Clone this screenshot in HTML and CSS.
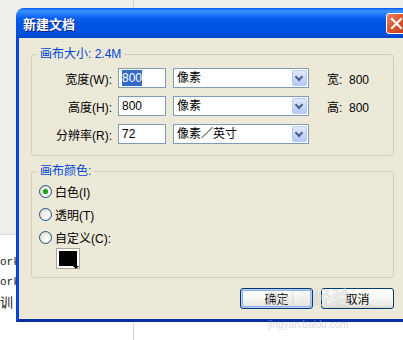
FILE: index.html
```html
<!DOCTYPE html>
<html lang="zh-CN">
<head>
    <meta charset="UTF-8">
    <title>新建文档</title>
    <link rel="stylesheet" href="styles.css">
</head>
<body>
    <div class="side">
        <p>ork</p>
        <p>ork</p>
        <p class="cjk">训</p>
    </div>

    <section class="dialog">
        <header class="titlebar">
            <h1>新建文档</h1>
            <span class="close">
                <svg width="13" height="13" viewBox="0 0 13 13">
                    <path d="M2 2 L11 11 M11 2 L2 11" stroke="#fff" stroke-width="2.2" stroke-linecap="square" fill="none"/>
                </svg>
            </span>
        </header>

        <div class="dialog-body">
            <fieldset class="group size-group">
                <legend>画布大小: 2.4M</legend>
                <div class="row">
                    <label>宽度(W):</label>
                    <span class="field"><span class="hl">800</span></span>
                    <span class="select">像素<span class="drop"></span></span>
                    <span class="info">宽:&nbsp; 800</span>
                </div>
                <div class="row">
                    <label>高度(H):</label>
                    <span class="field">800</span>
                    <span class="select">像素<span class="drop"></span></span>
                    <span class="info">高:&nbsp; 800</span>
                </div>
                <div class="row">
                    <label>分辨率(R):</label>
                    <span class="field">72</span>
                    <span class="select">像素／英寸<span class="drop"></span></span>
                </div>
            </fieldset>

            <fieldset class="group color-group">
                <legend>画布颜色:</legend>
                <div class="radio-row"><span class="radio checked"></span>白色(I)</div>
                <div class="radio-row"><span class="radio"></span>透明(T)</div>
                <div class="radio-row"><span class="radio"></span>自定义(C):</div>
                <div class="swatch"><span class="swatch-arrow"></span></div>
            </fieldset>

            <div class="buttons">
                <button class="btn default">确定</button>
                <button class="btn">取消</button>
            </div>
        </div>

        <div class="watermark">
            <span class="wm-logo">Bai<span class="paw">❀</span>经验</span>
            <span class="wm-url">jingyan.baidu.com</span>
        </div>
    </section>
</body>
</html>
```

FILE: styles.css
```css
body {
    margin: 0;
    width: 403px;
    height: 340px;
    overflow: hidden;
    position: relative;
    font-family: "Liberation Sans", "Noto Sans CJK SC", sans-serif;
    font-size: 12px;
    color: #000;
    background:
        linear-gradient(90deg, transparent 133px, #d4d4d0 133px, #d4d4d0 134px, transparent 134px),
        linear-gradient(180deg, #efeeea 234px, #d9d9d6 234px, #d9d9d6 235px, #fff 235px);
}

/* page text peeking out left of the dialog */
.side {
    padding-top: 252px;
    font-family: "Liberation Mono", "Noto Sans CJK SC", monospace;
    font-size: 11px;
    line-height: 20px;
    color: #222;
}

.side p {
    margin: 0;
    white-space: nowrap;
}

.side .cjk {
    font-family: "Noto Sans CJK SC", sans-serif;
    font-size: 13px;
}

/* the window */
.dialog {
    position: absolute;
    left: 16px;
    top: 8px;
    width: 396px;
}

.titlebar {
    height: 30px;
    display: flex;
    align-items: center;
    justify-content: space-between;
    border-radius: 8px 8px 0 0;
    background: linear-gradient(180deg, #0058ee 0%, #3d95ff 10%, #2b80fb 18%, #0a5eee 34%, #0055e5 55%, #0053e0 80%, #0046c8 100%);
}

.titlebar h1 {
    margin: 0 0 0 7px;
    font-family: "Noto Sans CJK SC", sans-serif;
    font-size: 13px;
    font-weight: bold;
    color: #fff;
    text-shadow: 1px 1px 0 #0a1e78;
}

.close {
    width: 19px;
    height: 19px;
    margin-right: 5px;
    display: flex;
    align-items: center;
    justify-content: center;
    border: 1px solid #fff;
    border-radius: 3px;
    background: linear-gradient(135deg, #e9876a 0%, #d9582f 45%, #c23b14 100%);
}

.dialog-body {
    background: #ece9d8;
    border: 3px solid #0846d9;
    border-top: 0;
    border-bottom-color: #0a2ea0;
    padding: 9px 15px 10px 12px;
}

.group {
    margin: 0;
    border: 1px solid #d0d0bf;
    border-radius: 3px;
    min-inline-size: 0;
}

.group legend {
    margin-left: 5px;
    padding: 0 3px;
    line-height: 14px;
    color: #0046d5;
}

.size-group {
    padding: 7px 0 11px 0;
}

.row {
    display: flex;
    align-items: center;
    height: 20px;
    margin-bottom: 8px;
}

.row:last-child {
    margin-bottom: 0;
}

.row label {
    width: 80px;
    text-align: right;
}

.field {
    margin-left: 6px;
    width: 43px;
    height: 18px;
    line-height: 18px;
    padding-left: 3px;
    border: 1px solid #7f9db9;
    background: #fff;
}

.hl {
    background: #316ac5;
    color: #fff;
    padding: 1px 0;
}

.select {
    margin-left: 7px;
    width: 131px;
    height: 18px;
    line-height: 18px;
    padding-left: 3px;
    border: 1px solid #7f9db9;
    background: #fff;
    display: flex;
    align-items: center;
    justify-content: space-between;
}

.drop {
    width: 15px;
    height: 16px;
    margin-right: 1px;
    box-sizing: border-box;
    border: 1px solid #b9cbf3;
    border-radius: 2px;
    background: linear-gradient(180deg, #dfe8fd 0%, #c6d6fb 60%, #b5c9f7 100%);
    position: relative;
}

.drop::after {
    content: "";
    position: absolute;
    left: 3px;
    top: 3px;
    width: 4px;
    height: 4px;
    border-right: 2px solid #4d6185;
    border-bottom: 2px solid #4d6185;
    transform: rotate(45deg);
}

.info {
    margin-left: 18px;
}

.color-group {
    margin-top: 8px;
    padding: 2px 0 9px 0;
}

.radio-row {
    display: flex;
    align-items: center;
    height: 23px;
}

.radio {
    width: 11px;
    height: 11px;
    margin: 0 3px 0 7px;
    border: 1px solid #1c5180;
    border-radius: 50%;
    background: radial-gradient(circle at 65% 65%, #fff 0%, #f3f2ed 40%, #d6d4c8 100%);
    position: relative;
}

.radio.checked::after {
    content: "";
    position: absolute;
    left: 3px;
    top: 3px;
    width: 5px;
    height: 5px;
    border-radius: 50%;
    background: #21a121;
    box-shadow: 0 0 1px #6fcf6f;
}

.swatch {
    margin-left: 25px;
    width: 18px;
    height: 15px;
    border: 2px solid #fff;
    outline: 1px solid #a8a79a;
    background: #000;
    position: relative;
}

.swatch-arrow {
    position: absolute;
    right: -2px;
    bottom: -3px;
    border-left: 3px solid transparent;
    border-right: 3px solid transparent;
    border-top: 3px solid #000;
}

.buttons {
    margin-top: 10px;
    display: flex;
    justify-content: flex-end;
    gap: 8px;
}

.btn {
    width: 73px;
    height: 21px;
    padding: 0;
    border: 1px solid #003c74;
    border-radius: 3px;
    background: linear-gradient(180deg, #ffffff 0%, #f6f6f2 50%, #ecebe5 85%, #d6d0c5 100%);
    font-family: "Noto Sans CJK SC", sans-serif;
    font-size: 12px;
    color: #000;
}

.btn.default {
    box-shadow: inset 0 0 0 1px #b7cdf5, inset 0 0 0 2px #8fb0ea;
}

/* faint photo watermark over the buttons */
.watermark {
    position: absolute;
    left: 250px;
    top: 279px;
    display: flex;
    flex-direction: column;
    align-items: center;
    pointer-events: none;
}

.wm-logo {
    font-family: "Liberation Sans", "Noto Sans CJK SC", sans-serif;
    font-size: 19px;
    font-weight: bold;
    line-height: 24px;
    color: rgba(255, 255, 255, 0.4);
    text-shadow: 0 0 1px rgba(150, 150, 150, 0.35);
}

.paw {
    font-size: 15px;
    margin: 0 1px;
}

.wm-url {
    margin-top: 7px;
    font-size: 10px;
    line-height: 12px;
    color: rgba(190, 190, 200, 0.6);
}
```
